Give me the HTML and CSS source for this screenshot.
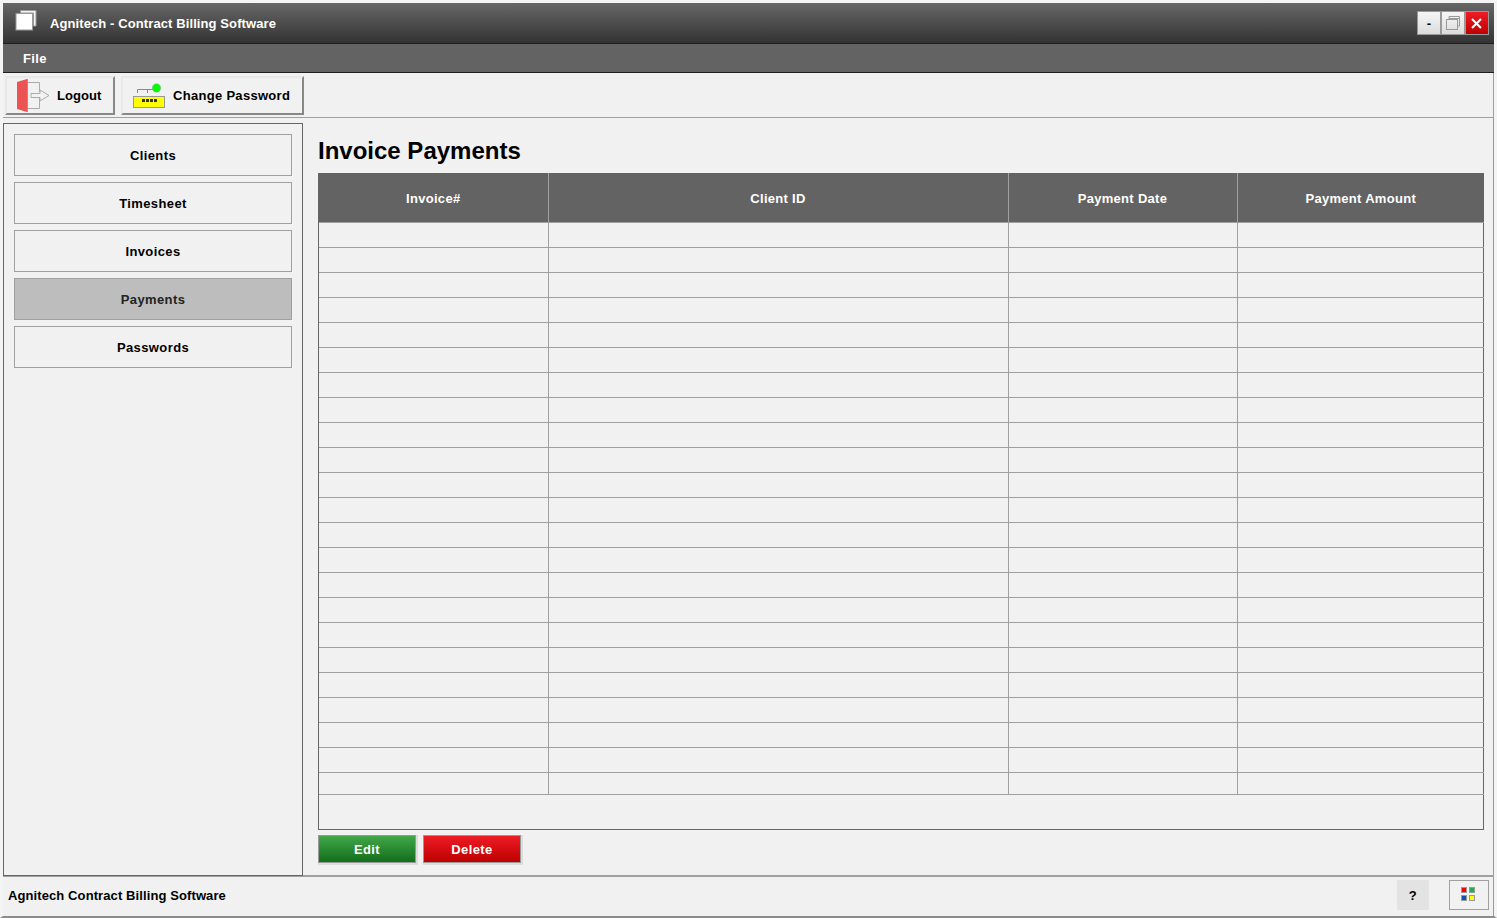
FILE: index.html
```html
<!DOCTYPE html>
<html lang="en">
<head>
<meta charset="utf-8">
<title>Agnitech - Contract Billing Software</title>
<link rel="stylesheet" href="styles.css">
</head>
<body>
<div class="window">
  <header class="titlebar">
    <svg class="app-icon" width="22" height="22" viewBox="0 0 22 22"><path d="M5.500.5h15.500v15.500h-2.500V3H5.500z" fill="#f4f4f4" stroke="#999"/><rect x="1" y="3.500" width="16.500" height="16.500" fill="#fff" stroke="#999"/></svg>
    <span class="title-text">Agnitech - Contract Billing Software</span>
    <div class="win-buttons">
      <button class="win-btn win-min">-</button>
      <button class="win-btn win-restore"><svg width="16" height="16" viewBox="0 0 16 16" fill="none" stroke="#999"><path d="M4 4V1.500h10.500V11H12.500"/><path d="M4 3.500h10.500"/><rect x="1.500" y="4.500" width="11" height="10"/></svg></button>
      <button class="win-btn win-close"><svg class="close-icon" width="11" height="11" viewBox="0 0 11 11" stroke="#fff" stroke-width="2" fill="none"><path d="M1 1l9 9M10 1l-9 9"/></svg></button>
    </div>
  </header>
  <nav class="menubar"><span class="menu-item">File</span></nav>
  <div class="toolbar">
    <button class="tool-btn tool-logout">
      <svg width="34" height="35" viewBox="0 0 34 35" fill="none"><path d="M11 4.500h11.500V14M22.500 19v11.500H11" stroke="#aaa"/><path d="M14 15.500h9V12l9 5.500-9 5.500v-3.500h-9z" fill="#f2f2f2" stroke="#aaa"/><path d="M0 4l10-3v33l-10-3z" fill="#ec5353"/><path d="M10.500 1v33" stroke="#999"/></svg>
      <span>Logout</span>
    </button>
    <button class="tool-btn tool-pass">
      <svg width="33" height="26" viewBox="0 0 33 26" fill="none"><path d="M4.500 10V6.500H20M14.500 10V6.500" stroke="#888"/><circle cx="23.500" cy="5" r="4.200" fill="#0f0" stroke="#8a8" stroke-width=".5"/><rect x=".5" y="13.500" width="31" height="11" fill="#ff0" stroke="#999"/><path d="M9 16h3v3H9zM13 16h3v3h-3zM17 16h3v3h-3zM21 16h3v3h-3z" fill="#333"/></svg>
      <span>Change Password</span>
    </button>
  </div>
  <div class="main">
    <aside class="sidebar">
      <button class="side-btn">Clients</button>
      <button class="side-btn">Timesheet</button>
      <button class="side-btn">Invoices</button>
      <button class="side-btn is-active">Payments</button>
      <button class="side-btn">Passwords</button>
    </aside>
    <section class="content">
      <h1 class="page-title">Invoice Payments</h1>
      <div class="grid-box">
        <table class="grid">
          <colgroup><col class="c1"><col class="c2"><col class="c3"><col class="c4"></colgroup>
          <thead><tr><th>Invoice#</th><th>Client ID</th><th>Payment Date</th><th>Payment Amount</th></tr></thead>
          <tbody>
            <tr><td></td><td></td><td></td><td></td></tr>
            <tr><td></td><td></td><td></td><td></td></tr>
            <tr><td></td><td></td><td></td><td></td></tr>
            <tr><td></td><td></td><td></td><td></td></tr>
            <tr><td></td><td></td><td></td><td></td></tr>
            <tr><td></td><td></td><td></td><td></td></tr>
            <tr><td></td><td></td><td></td><td></td></tr>
            <tr><td></td><td></td><td></td><td></td></tr>
            <tr><td></td><td></td><td></td><td></td></tr>
            <tr><td></td><td></td><td></td><td></td></tr>
            <tr><td></td><td></td><td></td><td></td></tr>
            <tr><td></td><td></td><td></td><td></td></tr>
            <tr><td></td><td></td><td></td><td></td></tr>
            <tr><td></td><td></td><td></td><td></td></tr>
            <tr><td></td><td></td><td></td><td></td></tr>
            <tr><td></td><td></td><td></td><td></td></tr>
            <tr><td></td><td></td><td></td><td></td></tr>
            <tr><td></td><td></td><td></td><td></td></tr>
            <tr><td></td><td></td><td></td><td></td></tr>
            <tr><td></td><td></td><td></td><td></td></tr>
            <tr><td></td><td></td><td></td><td></td></tr>
            <tr><td></td><td></td><td></td><td></td></tr>
            <tr class="row-last"><td></td><td></td><td></td><td></td></tr>
          </tbody>
        </table>
      </div>
      <div class="actions">
        <button class="act-btn act-edit">Edit</button>
        <button class="act-btn act-delete">Delete</button>
      </div>
    </section>
  </div>
  <footer class="statusbar">
    <span class="status-text">Agnitech Contract Billing Software</span>
    <button class="help-btn">?</button>
    <button class="theme-btn"><svg width="14" height="14" viewBox="0 0 14 14" stroke="#999"><rect x=".5" y=".5" width="5" height="5" fill="#f00"/><rect x="8.500" y=".5" width="5" height="5" fill="#1db14b"/><rect x=".5" y="8.500" width="5" height="5" fill="#0b56a8"/><rect x="8.500" y="8.500" width="5" height="5" fill="#ff0"/></svg></button>
  </footer>
</div>
</body>
</html>
```

FILE: styles.css
```css
* { box-sizing: border-box; }
html, body { margin: 0; padding: 0; }
body {
  width: 1497px;
  height: 918px;
  overflow: hidden;
  background: #f1f1f1;
  font-family: "Liberation Sans", Arial, sans-serif;
  font-size: 13px;
  font-weight: 700;
  letter-spacing: .4px;
  color: #000;
}
button { font: inherit; letter-spacing: inherit; color: inherit; padding: 0; margin: 0; }
.window {
  width: 1497px;
  height: 918px;
  display: flex;
  flex-direction: column;
  border-top: 3px solid #f4f4f4;
  border-left: 3px solid #f4f4f4;
  border-right: 3px solid #f4f4f4;
  border-bottom: 2px solid #8c8c8c;
  box-shadow: inset -1px 0 0 #999;
  background: #f1f1f1;
}
.titlebar {
  height: 41px;
  flex: none;
  display: flex;
  align-items: center;
  background: linear-gradient(#676767, #333);
  border-bottom: 1px solid #1e1e1e;
  color: #fff;
  padding-left: 12px;
}
.app-icon { flex: none; margin-top: -5px; }
.title-text { margin-left: 13px; letter-spacing: .1px; }
.win-buttons {
  margin-left: auto;
  margin-right: 5px;
  display: flex;
  gap: 2px;
  background: #999;
  border: 1px solid #999;
  height: 24px;
}
.win-btn {
  width: 22px;
  height: 22px;
  border: 0;
  display: flex;
  align-items: center;
  justify-content: center;
  color: #000;
  background: linear-gradient(#f6f6f6, #dcdcdc);
}
.win-close { background: linear-gradient(#ee1c25, #c00000); padding-right: 1px; }
.menubar {
  height: 29px;
  flex: none;
  background: #636363;
  border-bottom: 1px solid #1e1e1e;
  color: #fff;
  display: flex;
  align-items: center;
  padding-left: 20px;
}
.toolbar {
  height: 45px;
  flex: none;
  border-bottom: 1px solid #a0a0a0;
  border-right: 1px solid #a0a0a0;
  display: flex;
  gap: 6px;
  padding: 3px 0 0 2px;
  background: #f1f1f1;
}
.tool-btn {
  height: 39px;
  display: flex;
  align-items: center;
  background: #f1f1f1;
  border: 2px solid;
  border-color: #e8e8e8 #888 #888 #e8e8e8;
  letter-spacing: .3px;
}
.tool-logout { width: 110px; padding-left: 10px; gap: 6px; letter-spacing: .05px; }
.tool-pass { width: 183px; padding-left: 10px; gap: 7px; }
.main {
  flex: 1;
  display: flex;
  min-height: 0;
  border-bottom: 2px solid #a0a0a0;
}
.sidebar {
  width: 300px;
  flex: none;
  margin-top: 5px;
  margin-bottom: -1px;
  border: 1px solid #666;
  padding: 10px;
  display: flex;
  flex-direction: column;
  gap: 6px;
}
.side-btn {
  width: 278px;
  height: 42px;
  background: #f1f1f1;
  border: 1px solid #a0a0a0;
}
.side-btn.is-active { background: #bdbdbd; color: #222; }
.content {
  flex: 1;
  padding: 0 10px 0 15px;
  display: flex;
  flex-direction: column;
  min-width: 0;
}
.page-title {
  margin: 0;
  height: 55px;
  line-height: 66px;
  font-size: 24px;
  letter-spacing: 0;
  font-weight: 700;
}
.grid-box {
  width: 1166px;
  height: 657px;
  flex: none;
  border: 1px solid #666;
  border-top: 0;
}
.grid {
  width: 1165px;
  margin: 0;
  border-collapse: collapse;
  table-layout: fixed;
}
.c1 { width: 229px; }
.c2 { width: 460px; }
.c3 { width: 229px; }
.c4 { width: 247px; }
.grid th {
  height: 49px;
  padding: 2px 0 0;
  background: #636363;
  color: #fff;
  font-weight: 700;
  letter-spacing: .3px;
  border-left: 1px solid #a0a0a0;
  border-bottom: 1px solid #a0a0a0;
}
.grid th:first-child { border-left: 0; }
.grid td {
  height: 25px;
  padding: 0;
  border-left: 1px solid #a0a0a0;
  border-bottom: 1px solid #a0a0a0;
}
.grid td:first-child { border-left: 0; }
.row-last td { height: 22px; }
.actions {
  display: flex;
  gap: 7px;
  margin-top: 5px;
}
.act-btn {
  width: 98px;
  height: 28px;
  border: 1px solid #999;
  color: #fff;
  box-shadow: 1px 1px 0 1px #dcdcdc;
}
.act-edit { background: linear-gradient(#43a649, #126f1c); }
.act-delete { background: linear-gradient(#ee1c25, #bd0000); }
.statusbar {
  height: 39px;
  flex: none;
  display: flex;
  align-items: center;
  padding: 0 0 3px 5px;
}
.status-text { letter-spacing: .1px; }
.help-btn {
  margin-left: auto;
  width: 32px;
  height: 30px;
  border: 0;
  background: #e3e3e3;
}
.theme-btn {
  margin-left: 20px;
  margin-right: 5px;
  width: 40px;
  height: 30px;
  border: 1px solid #a0a0a0;
  background: #f1f1f1;
  display: flex;
  align-items: center;
  justify-content: center;
  padding: 0 2px 2px 0;
}
```
